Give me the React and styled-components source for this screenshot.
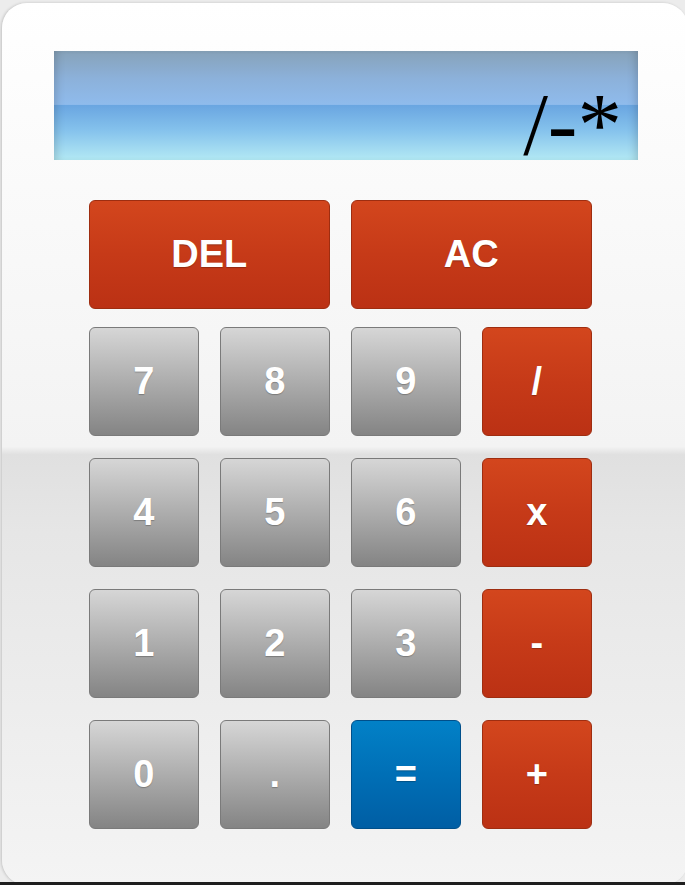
import React, { useState } from 'react'
import styled, { createGlobalStyle, css } from 'styled-components'

const GlobalStyle = createGlobalStyle`
    html, body {
        margin: 0;
        padding: 0;
        background: #1e1e1e;
    }
    * {
        box-sizing: border-box;
    }
`

const Page = styled.div`
    display: flex;
    flex-direction: column;
    width: 685px;
    height: 885px;
    overflow: hidden;
`

const Stage = styled.main`
    height: 882px;
    overflow: hidden;
    background: #ececec;
    padding: 3px 0 0 2px;
`

const Strip = styled.div`
    height: 3px;
    background: #1e1e1e;
`

const Calculator = styled.section`
    width: 686px;
    height: 882px;
    border-radius: 25px;
    padding: 48px 0 0 52px;
    background: linear-gradient(
        to bottom,
        #ffffff 0%,
        #f9f9f9 25%,
        #f3f3f3 50.3%,
        #e0e0e0 51.2%,
        #e6e6e6 60%,
        #f4f4f4 100%
    );
    box-shadow: -1px 0 3px rgba(0, 0, 0, 0.18);
`

const Display = styled.div`
    width: 584px;
    height: 109px;
    overflow: hidden;
    padding: 38.5px 16px 0 0;
    text-align: right;
    font-family: "Liberation Serif", "Times New Roman", serif;
    font-size: 89px;
    line-height: 69px;
    color: #000;
    white-space: nowrap;
    background: linear-gradient(
        to bottom,
        #87a2b9 0%,
        #8cb1da 25%,
        #8fbbec 49%,
        #6aa6e1 50%,
        #84c1ec 72%,
        #b3e9f4 100%
    );
    box-shadow: inset 8px 0 10px -6px rgba(0, 0, 0, 0.18),
        inset -8px 0 10px -6px rgba(0, 0, 0, 0.18);
`

const Keys = styled.div`
    display: grid;
    grid-template-columns: repeat(4, 109.5px);
    grid-template-rows: 105px repeat(4, 109px);
    column-gap: 21.5px;
    row-gap: 22px;
    margin: 40px 0 0 35px;
`

const tones = {
    gray: css`
        background: linear-gradient(to bottom, #d6d6d6 0%, #adadad 50%, #848484 100%);
        border: 1px solid #7a7a7a;
    `,
    red: css`
        background: linear-gradient(to bottom, #d3461d 0%, #c63a18 50%, #bb3114 100%);
        border: 1px solid #9e2d10;
    `,
    blue: css`
        background: linear-gradient(to bottom, #0281c7 0%, #006fb6 50%, #005ea4 100%);
        border: 1px solid #004f8a;
    `,
}

const Key = styled.button`
    grid-column: span ${({ $wide }) => ($wide ? 2 : 1)};
    align-self: start;
    height: 109px;
    display: grid;
    place-items: center;
    padding: 0;
    border-radius: 6px;
    font-family: "Liberation Sans", Arial, sans-serif;
    font-weight: bold;
    font-size: 38px;
    color: #fff;
    text-shadow: 0 1px 1px rgba(0, 0, 0, 0.25);
    cursor: pointer;
    ${({ $tone }) => tones[$tone]}
    &:focus {
        outline: none;
    }
`

const keys = [
    { label: 'DEL', tone: 'red', wide: true },
    { label: 'AC', tone: 'red', wide: true },
    { label: '7', tone: 'gray' },
    { label: '8', tone: 'gray' },
    { label: '9', tone: 'gray' },
    { label: '/', tone: 'red' },
    { label: '4', tone: 'gray' },
    { label: '5', tone: 'gray' },
    { label: '6', tone: 'gray' },
    { label: 'x', tone: 'red' },
    { label: '1', tone: 'gray' },
    { label: '2', tone: 'gray' },
    { label: '3', tone: 'gray' },
    { label: '-', tone: 'red' },
    { label: '0', tone: 'gray' },
    { label: '.', tone: 'gray' },
    { label: '=', tone: 'blue' },
    { label: '+', tone: 'red' },
]

function App() {
    const [screen, setScreen] = useState('/-*')

    const press = (label) => {
        if (label === 'AC') return setScreen('')
        if (label === 'DEL') return setScreen(prev => prev.slice(0, -1))
        if (label === '=') return
        setScreen(prev => prev + (label === 'x' ? '*' : label))
    }

    return (
        <Page>
            <GlobalStyle />
            <Stage>
                <Calculator>
                    <Display>{screen}</Display>
                    <Keys>
                        {keys.map(k =>
                            <Key key={k.label} $tone={k.tone} $wide={k.wide} onClick={() => press(k.label)}>
                                {k.label}
                            </Key>
                        )}
                    </Keys>
                </Calculator>
            </Stage>
            <Strip />
        </Page>
    )
}

export default App
